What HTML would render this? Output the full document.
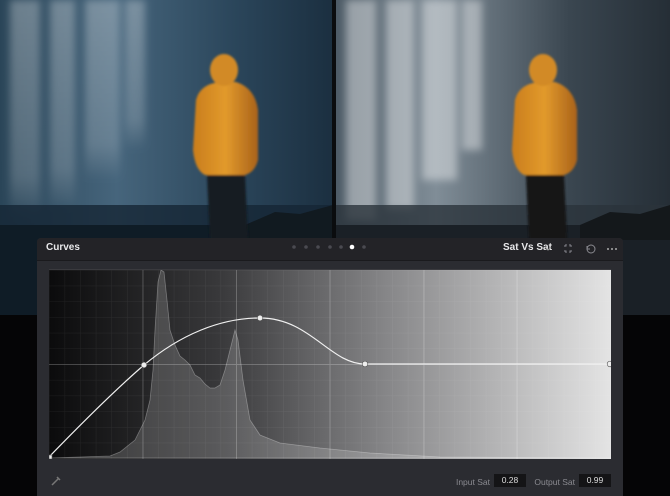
<!DOCTYPE html>
<html><head><meta charset="utf-8"><style>
html,body{margin:0;padding:0;width:670px;height:496px;overflow:hidden;background:#050506;font-family:"Liberation Sans",sans-serif;}
.abs{position:absolute}
</style></head><body>
<svg class="abs" style="left:0;top:0" width="670" height="496" viewBox="0 0 670 496">
<defs>
<linearGradient id="skyL" x1="0" y1="0" x2="1" y2="0">
<stop offset="0" stop-color="#2a4558"/><stop offset="0.35" stop-color="#46657c"/><stop offset="0.7" stop-color="#2b465b"/><stop offset="1" stop-color="#1b2f40"/></linearGradient>
<linearGradient id="skyR" x1="0" y1="0" x2="1" y2="0">
<stop offset="0" stop-color="#4d5b66"/><stop offset="0.3" stop-color="#808d97"/><stop offset="0.7" stop-color="#3a4650"/><stop offset="1" stop-color="#252e36"/></linearGradient>
<linearGradient id="fall" x1="0" y1="0" x2="0" y2="1"><stop offset="0" stop-color="#fff" stop-opacity="0.3"/><stop offset="0.8" stop-color="#fff" stop-opacity="0.18"/><stop offset="1" stop-color="#fff" stop-opacity="0"/></linearGradient>
<linearGradient id="jk" x1="0" y1="0" x2="1" y2="0"><stop offset="0" stop-color="#c97d1c"/><stop offset="0.5" stop-color="#e29a2c"/><stop offset="1" stop-color="#a9621a"/></linearGradient>
<filter id="bl"><feGaussianBlur stdDeviation="4"/></filter>
<filter id="bl2"><feGaussianBlur stdDeviation="1"/></filter>
</defs>
<rect x="0" y="0" width="333" height="315" fill="url(#skyL)"/>
<g filter="url(#bl)" fill="url(#fall)">
<rect x="10" y="0" width="30" height="220"/><rect x="50" y="0" width="25" height="210"/><rect x="85" y="0" width="35" height="180"/><rect x="125" y="0" width="20" height="150"/>
</g>
<rect x="0" y="205" width="333" height="110" fill="#152634" opacity="0.8"/>
<rect x="0" y="225" width="333" height="90" fill="#0f1c26"/>
<path d="M245 225 L275 212 L300 214 L333 205 L333 240 L245 240Z" fill="#111a20"/>
<g filter="url(#bl2)">
<path d="M207 175 L245 175 L248 240 L210 240Z" fill="#141a22"/>
<path d="M196 100 Q200 84 220 82 L236 82 Q255 88 258 110 L258 160 Q255 172 245 175 L205 175 Q195 170 193 150Z" fill="url(#jk)"/>
<ellipse cx="224" cy="70" rx="14" ry="16" fill="#d28a25"/>
</g>
<rect x="336" y="0" width="334" height="315" fill="url(#skyR)"/>
<g filter="url(#bl)" fill="#fff" opacity="0.4">
<rect x="346" y="0" width="30" height="220"/><rect x="386" y="0" width="28" height="210"/><rect x="422" y="0" width="35" height="180"/><rect x="462" y="0" width="20" height="150"/>
</g>
<rect x="336" y="205" width="334" height="110" fill="#2a333b" opacity="0.8"/>
<rect x="336" y="225" width="334" height="90" fill="#1a2026"/>
<path d="M580 225 L610 212 L640 214 L670 205 L670 240 L580 240Z" fill="#14181b"/>
<g filter="url(#bl2)">
<path d="M526 175 L564 175 L567 240 L529 240Z" fill="#121518"/>
<path d="M515 100 Q519 84 539 82 L555 82 Q574 88 577 110 L577 160 Q574 172 564 175 L524 175 Q514 170 512 150Z" fill="url(#jk)"/>
<ellipse cx="543" cy="70" rx="14" ry="16" fill="#d28a25"/>
</g>
<rect x="332" y="0" width="4" height="315" fill="#0a0c0e"/>
</svg>

<div class="abs" style="left:37px;top:238px;width:586px;height:258px;background:#2b2c31;border-radius:4px 4px 0 0;">
<div class="abs" style="left:0;top:0;width:586px;height:22px;background:#232327;border-bottom:1px solid #1a1a1d;border-radius:4px 4px 0 0;"></div>
<div class="abs" style="left:9px;top:4px;color:#e8e8ea;font-size:10px;font-weight:bold;">Curves</div>
<div class="abs" style="left:466px;top:4px;color:#e8e8ea;font-size:10px;font-weight:bold;white-space:nowrap;">Sat Vs Sat</div>
<svg class="abs" style="left:507px;top:7px" width="8" height="8" fill="none" stroke="#999" stroke-width="1"><path d="M1 2l3 3 3-3"/></svg>
<svg class="abs" style="left:250px;top:6px" width="90" height="10">
<g fill="#4a4a50"><circle cx="7" cy="3" r="1.8"/><circle cx="19" cy="3" r="1.8"/><circle cx="31" cy="3" r="1.8"/><circle cx="43" cy="3" r="1.8"/><circle cx="54" cy="3" r="1.8"/><circle cx="77" cy="3" r="1.8"/></g>
<circle cx="65" cy="3" r="2.3" fill="#fff"/></svg>
<svg class="abs" style="left:524px;top:4px" width="60" height="14" fill="none" stroke="#8a8a90" stroke-width="1">
<path d="M3 4h2v-2M9 2v2h2M3 9h2v2M9 11v-2h2"/>
<circle cx="30" cy="7" r="4"/><path d="M26 4l0 3h3"/>
<g fill="#aaa" stroke="none"><circle cx="47" cy="7" r="1"/><circle cx="51" cy="7" r="1"/><circle cx="55" cy="7" r="1"/></g>
</svg>
<div class="abs" style="left:12px;top:31px;width:562px;height:189px;background:#3a3a3e;"></div>
<div class="abs" style="right:133px;top:239px;color:#8a8a90;font-size:8.5px;white-space:nowrap;">Input Sat</div>
<div class="abs" style="left:457px;top:236px;width:32px;height:13px;background:#141416;color:#ddd;font-size:8.5px;text-align:center;line-height:13px;">0.28</div>
<div class="abs" style="right:48px;top:239px;color:#8a8a90;font-size:8.5px;white-space:nowrap;">Output Sat</div>
<div class="abs" style="left:542px;top:236px;width:32px;height:13px;background:#141416;color:#ddd;font-size:8.5px;text-align:center;line-height:13px;">0.99</div>
<svg class="abs" style="left:13px;top:237px" width="12" height="12" stroke="#777" stroke-width="1.5" fill="none"><path d="M2 10L9 3M7 2l3 3"/></svg>
</div>

<svg class="abs" style="left:49px;top:270px" width="562" height="189" viewBox="49 270 562 189">
<defs>
<linearGradient id="g" x1="0" y1="0" x2="1" y2="0"><stop offset="0" stop-color="#0b0b0c"/><stop offset="0.3" stop-color="#38383a"/><stop offset="0.6" stop-color="#868688"/><stop offset="1" stop-color="#e4e4e4"/></linearGradient>
<pattern id="grid" x="49" y="270" width="15.6" height="15.7" patternUnits="userSpaceOnUse"><path d="M0 0V15.7M0 0H15.6" stroke="#fff" stroke-opacity="0.07" stroke-width="1" fill="none"/></pattern>
</defs>
<rect x="49" y="270" width="562" height="189" fill="url(#g)"/>
<rect x="49" y="270" width="562" height="189" fill="url(#grid)"/>
<g stroke="#fff" stroke-opacity="0.2" stroke-width="1"><path d="M143 270V459M236.5 270V459M330 270V459M424 270V459M517 270V459M49 364.5H611"/></g>
<path d="M49 458 L110 456 L120 452 L135 440 L145 420 L150 400 L153 370 L155 330 L158 282 L161 270 L164 272 L167 300 L170 330 L175 345 L180 356 L185 360 L190 365 L195 375 L200 378 L205 384 L210 388 L215 388 L220 385 L225 370 L230 350 L235 330 L238 340 L243 380 L250 420 L260 435 L280 443 L320 448 L370 453 L440 457 L611 458Z" fill="#fff" fill-opacity="0.17" stroke="#fff" stroke-opacity="0.3" stroke-width="0.8"/>
<path d="M49 457 C80 425 115 390 144 365 C180 335 220 318 260 318 C310 318 330 364 365 364 L611 364" fill="none" stroke="#f0f0f0" stroke-width="1.2"/>
<g fill="#eee" stroke="#555" stroke-width="0.6"><circle cx="144" cy="365" r="2.8"/><circle cx="260" cy="318" r="2.8"/><circle cx="365" cy="364" r="2.8"/><circle cx="610" cy="364" r="2.8"/><rect x="49" y="455" width="3" height="4"/></g>
</svg>
</body></html>
